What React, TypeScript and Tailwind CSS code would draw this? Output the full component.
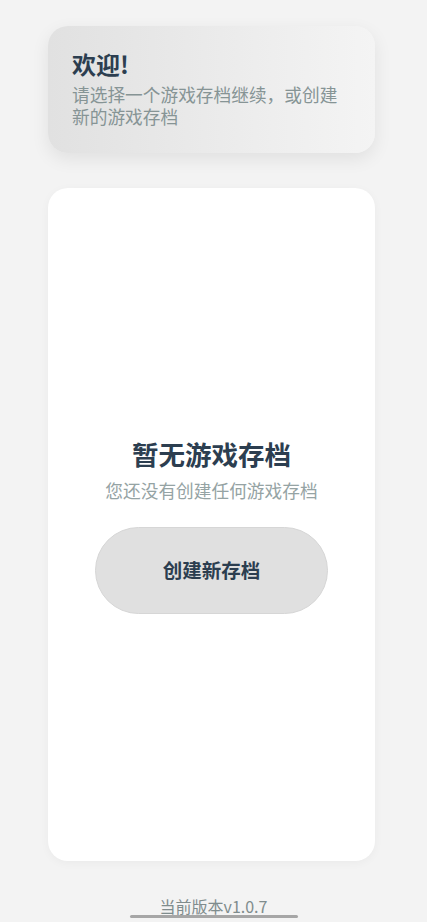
export default function App() {
  const font = { fontFamily: '"Noto Sans CJK SC", "Noto Sans", sans-serif' };
  return (
    <div className="min-h-[922px] w-[427px] bg-[#f3f3f3] flex flex-col" style={font}>
      <div className="ml-12 mt-[26px] w-[327px] h-[127px] rounded-[20px] bg-gradient-to-r from-[#e1e1e1] to-[#f4f4f4] shadow-[0_6px_18px_rgba(0,0,0,0.08)] px-6 pt-[21px]">
        <h1 className="text-[24px] leading-[34px] font-bold text-[#2c3e50]">欢迎!</h1>
        <p className="text-[17.7px] leading-[22px] text-[#869495] mt-[2px]">请选择一个游戏存档继续，或创建新的游戏存档</p>
      </div>

      <div className="ml-12 mt-[35px] w-[327px] h-[673px] rounded-[20px] bg-white shadow-[0_2px_10px_rgba(0,0,0,0.04)] flex flex-col items-center justify-center">
        <h2 className="text-[26.5px] leading-[36px] font-bold text-[#2c3e50]">暂无游戏存档</h2>
        <p className="text-[17.7px] leading-[24px] text-[#95a3a4] mt-[6px]">您还没有创建任何游戏存档</p>
        <button className="mt-[25px] w-[233px] h-[87px] rounded-full bg-[#e0e0e0] border border-[#d6d6d6] text-[19.5px] font-bold text-[#2c3e50]">
          创建新存档
        </button>
      </div>

      <div className="mt-[35px] flex flex-col items-center">
        <span className="text-[16px] leading-[20px] text-[#7f8c8d]">当前版本v1.0.7</span>
        <div className="-mt-[1px] w-[168px] h-[3px] rounded-full bg-[#a6a6a6]" />
      </div>
    </div>
  );
}
